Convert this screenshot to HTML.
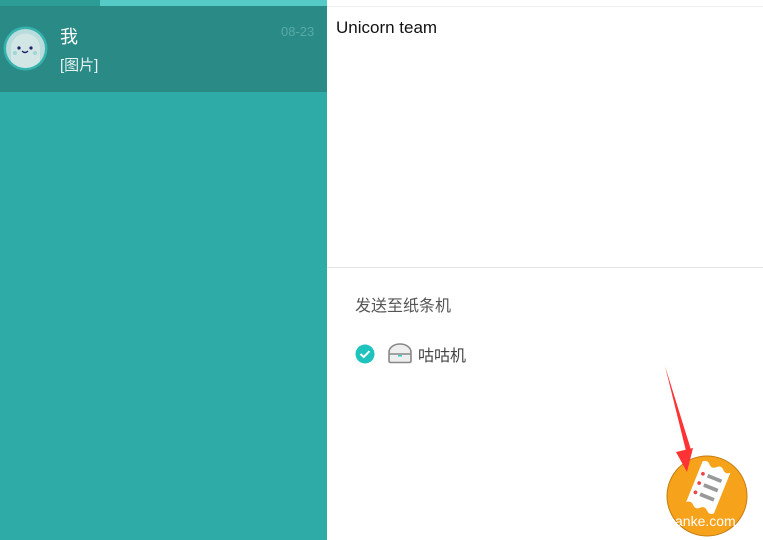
<!DOCTYPE html>
<html><head><meta charset="utf-8"><style>
*{margin:0;padding:0;box-sizing:border-box}
body{width:763px;height:540px;overflow:hidden;background:#fff;font-family:"Liberation Sans","Noto Sans CJK SC",sans-serif;position:relative}
.left{position:absolute;left:0;top:0;width:327px;height:540px;background:#2eaba6}
.top1{position:absolute;left:0;top:0;width:100px;height:6px;background:#2c9c97}
.top2{position:absolute;left:100px;top:0;width:227px;height:6px;background:#56cac6}
.sel{position:absolute;left:0;top:6px;width:327px;height:86px;background:#2a8a86}
.name{position:absolute;left:60px;top:23px;color:#fff;font-size:18px}
.prev{position:absolute;left:60px;top:54px;color:#e6f3f2;font-size:15px}
.date{position:absolute;left:281px;top:24px;color:#58aaa6;font-size:13px}
.tline{position:absolute;left:327px;top:6px;width:436px;height:1px;background:#eee}
.title{position:absolute;left:336px;top:18px;font-size:17px;color:#111}
.div{position:absolute;left:327px;top:267px;width:436px;height:1px;background:#e4e4e4}
.send{position:absolute;left:355px;top:292px;font-size:16px;color:#555}
.dev{position:absolute;left:418px;top:342px;font-size:16px;color:#444}
</style></head><body>
<div class="left"></div><div class="top1"></div><div class="top2"></div>
<div class="sel"></div>
<svg style="position:absolute;left:3px;top:26px" width="45" height="45" viewBox="0 0 45 45">
<defs><clipPath id="c"><circle cx="22.5" cy="22.5" r="19.5"/></clipPath></defs>
<circle cx="22.5" cy="22.5" r="22" fill="#37b3ae"/><circle cx="22.5" cy="22.5" r="19.5" fill="#b9dcdc"/>
<path clip-path="url(#c)" d="M8 45 L8 22 A14.5 14.5 0 0 1 37 22 L37 45Z" fill="#d3e6e6"/>
<circle cx="16" cy="22" r="1.6" fill="#226"/><circle cx="28" cy="22" r="1.6" fill="#226"/>
<path d="M19 25 Q22 28 25 25" stroke="#226" stroke-width="1.3" fill="none"/>
<circle cx="12" cy="27" r="2" fill="#9fd6d6"/><circle cx="32" cy="27" r="2" fill="#9fd6d6"/>
</svg>
<div class="name">我</div><div class="prev">[图片]</div><div class="date">08-23</div>
<div class="tline"></div>
<div class="title">Unicorn team</div>
<div class="div"></div>
<div class="send">发送至纸条机</div>
<svg style="position:absolute;left:355px;top:344px" width="20" height="20" viewBox="0 0 20 20"><circle cx="10" cy="10" r="9.5" fill="#1fc3be"/><path d="M5.5 10 L8.7 13 L14.5 7.2" stroke="#fff" stroke-width="2" fill="none"/></svg>
<svg style="position:absolute;left:387px;top:342px" width="26" height="22" viewBox="0 0 26 22"><path d="M2 19 L2 10 A11 8 0 0 1 24 10 L24 19 Q24 20.5 22 20.5 L4 20.5 Q2 20.5 2 19Z" fill="#eee" stroke="#888" stroke-width="1.6"/><line x1="2" y1="12" x2="24" y2="12" stroke="#888" stroke-width="1.4"/><rect x="11" y="13" width="4" height="1.5" fill="#3cc"/></svg>
<div class="dev">咕咕机</div>
<svg style="position:absolute;left:640px;top:360px" width="123" height="180" viewBox="0 0 123 180">
<circle cx="67" cy="136" r="40" fill="#f7a21b" stroke="#c47d10" stroke-width="1"/>
<g transform="translate(68 128) rotate(22) scale(1.25) translate(-68 -128)">
<path d="M56 110 q3 -3 6 0 q3 3 6 0 q3 -3 6 0 q3 3 6 0 L80 145 q-3 3 -6 0 q-3 -3 -6 0 q-3 3 -6 0 q-3 -3 -6 0 Z" fill="#fff"/>
<circle cx="60" cy="119" r="1.5" fill="#e44"/><rect x="64" y="117.5" width="12" height="3" fill="#999"/>
<circle cx="60" cy="127" r="1.5" fill="#e44"/><rect x="64" y="125.5" width="12" height="3" fill="#999"/>
<circle cx="60" cy="135" r="1.5" fill="#e44"/><rect x="64" y="133.5" width="12" height="3" fill="#999"/>
</g>
<path d="M25 6 L47 95 L52 93 Z" fill="#f33"/><path d="M36 92 L47 112 L53 88 Z" fill="#f33"/>
<text x="35" y="166" font-family="Liberation Sans" font-size="14" fill="#fff">anke.com</text>
</svg>
</body></html>
